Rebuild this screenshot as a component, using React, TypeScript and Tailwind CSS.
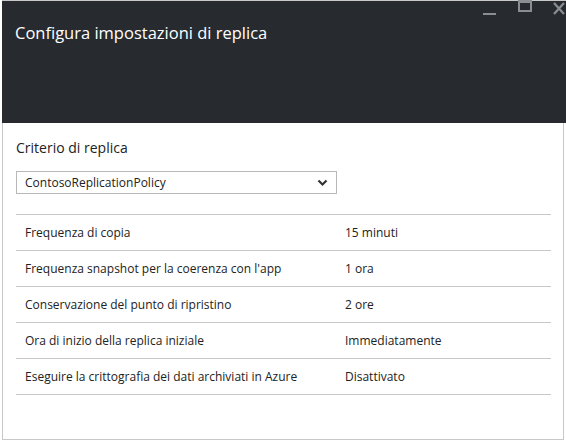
import React from "react";

const rows: [string, string][] = [
  ["Frequenza di copia", "15 minuti"],
  ["Frequenza snapshot per la coerenza con l'app", "1 ora"],
  ["Conservazione del punto di ripristino", "2 ore"],
  ["Ora di inizio della replica iniziale", "Immediatamente"],
  ["Eseguire la crittografia dei dati archiviati in Azure", "Disattivato"],
];

export default function App() {
  return (
    <div
      className="w-[566px] h-[442px] bg-white overflow-hidden"
      style={{ fontFamily: '"Segoe UI", "Open Sans", "Noto Sans", sans-serif' }}
    >
      <div className="ml-[2px] w-[564px] h-[123px] bg-[#272b30] border-t border-[#c8c8c8] relative">
        <div className="pt-[20px] pl-[13px] text-[16.5px] text-white leading-[24px]">
          Configura impostazioni di replica
        </div>
        <div className="absolute left-[481px] top-[12px] w-[13px] h-[2px] bg-[#8b8e91]" />
        <div className="absolute left-[516px] top-[-2px] w-[14px] h-[13px] border-2 border-[#8b8e91] border-t-[4px]" />
        <svg className="absolute left-[550px] top-[1px]" width="14" height="13" viewBox="0 0 14 13">
          <path d="M2 1 L12 12 M12 1 L2 12" stroke="#8b8e91" strokeWidth="2.2" />
        </svg>
      </div>
      <div className="ml-[2px] w-[562px] h-[317px] border-l border-r border-b border-[#c8c8c8] px-[13px]">
        <div className="pt-[15px] text-[14px] leading-[20px] text-[#222]">Criterio di replica</div>
        <div className="mt-[13px] w-[321px] h-[23px] border border-[#b8b8b8] flex items-center justify-between pl-[8px] pr-[8px]">
          <span className="text-[12px] text-[#222]">ContosoReplicationPolicy</span>
          <svg width="11" height="8" viewBox="0 0 11 8">
            <path d="M1.5 1.5 L5.5 5.5 L9.5 1.5" fill="none" stroke="#333" strokeWidth="2.2" />
          </svg>
        </div>
        <div className="mt-[20px] w-[535px] border-t border-[#c8c8c8]">
          {rows.map(([k, v]) => (
            <div key={k} className="h-[36px] border-b border-[#c8c8c8] flex items-center text-[12px] text-[#222]">
              <div className="w-[329px] pl-[9px]">{k}</div>
              <div>{v}</div>
            </div>
          ))}
        </div>
      </div>
    </div>
  );
}
